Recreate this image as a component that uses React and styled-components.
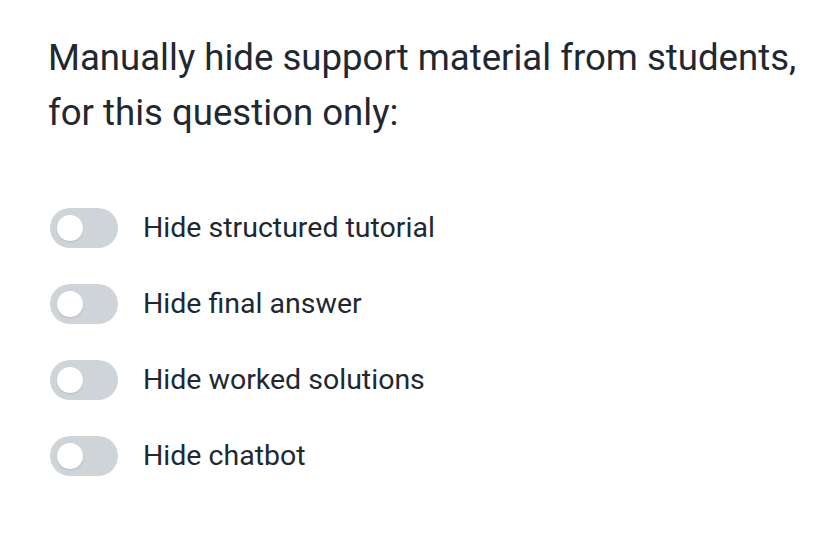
import React, { useState } from 'react';
import styled, { createGlobalStyle } from 'styled-components';

// ----- GLOBAL

const GlobalStyle = createGlobalStyle`
	html, body {
		margin: 0;
		padding: 0;
		background: #ffffff;
	}
	body {
		font-family: Roboto, "Liberation Sans", Arial, sans-serif;
		color: #212830;
	}
`;

// ----- STYLED COMPONENTS

const Panel = styled.div`
	padding: 30px 0 30px 48px;
`;
const Heading = styled.p`
	margin: 0 0 68px;
	font-size: 36.6px;
	line-height: 55px;
	font-weight: 400;
	white-space: nowrap;
	color: #212830;
`;
const OptionList = styled.ul`
	list-style: none;
	margin: 0;
	padding: 0 0 0 2px;
	display: flex;
	flex-direction: column;
	gap: 36px;
`;
const OptionRow = styled.li`
	display: flex;
	align-items: center;
	gap: 25px;
`;
const Track = styled.button`
	position: relative;
	width: 68px;
	height: 40px;
	border: 0;
	padding: 0;
	border-radius: 20px;
	background: ${({ on }) => (on ? '#3b82f6' : '#cfd4d9')};
	cursor: pointer;
	flex-shrink: 0;
`;
const Knob = styled.span`
	position: absolute;
	top: 7px;
	left: ${({ on }) => (on ? '35px' : '7px')};
	width: 26px;
	height: 26px;
	border-radius: 50%;
	background: #ffffff;
	box-shadow: 0 1px 2px rgba(0, 0, 0, 0.12);
`;
const Label = styled.span`
	font-size: 28.5px;
	line-height: 34px;
	color: #212830;
`;

// ----- CONTENTS

const options = [
	'Hide structured tutorial',
	'Hide final answer',
	'Hide worked solutions',
	'Hide chatbot',
];

export default function App() {
	const [flags, setFlags] = useState(options.map(() => false));

	const toggle = i => setFlags(prev => prev.map((v, j) => (j === i ? !v : v)));

	return (
		<>
			<GlobalStyle />
			<Panel>
				<Heading>
					Manually hide support material from students,
					<br />
					for this question only:
				</Heading>
				<OptionList>
					{options.map((text, i) => (
						<OptionRow key={text}>
							<Track on={flags[i] ? 1 : 0} onClick={() => toggle(i)}>
								<Knob on={flags[i] ? 1 : 0} />
							</Track>
							<Label>{text}</Label>
						</OptionRow>
					))}
				</OptionList>
			</Panel>
		</>
	);
}
